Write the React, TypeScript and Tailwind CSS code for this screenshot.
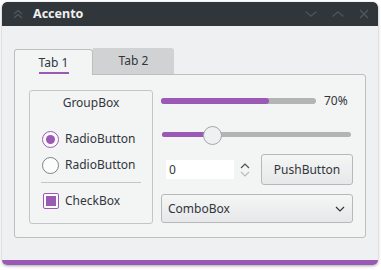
import React from 'react';

const font = { fontFamily: '"Noto Sans", "Open Sans", sans-serif' };

const Chevron = ({ d, className }: { d: string; className?: string }) => (
  <svg width="14" height="10" viewBox="0 0 14 10" className={className} fill="none">
    <path d={d} stroke="currentColor" strokeWidth="1.5" strokeLinecap="round" strokeLinejoin="round" />
  </svg>
);

const TitleBar = () => (
  <div className="flex h-[24px] items-center rounded-t-[5px] bg-[#31363b] pl-[10px] pr-[8px]">
    <svg width="12" height="12" viewBox="0 0 12 12" fill="none" className="text-[#4d545b]">
      <path d="M2 6 L6 2.5 L10 6 M2 10 L6 6.5 L10 10" stroke="currentColor" strokeWidth="1.6" strokeLinejoin="round" />
    </svg>
    <span className="ml-[9px] text-[12.5px] font-bold text-[#eff0f1]">Accento</span>
    <div className="ml-auto flex items-center gap-[13px] text-[#4d545b]">
      <Chevron d="M2 3 L7 7 L12 3" />
      <Chevron d="M2 7 L7 3 L12 7" />
      <svg width="12" height="12" viewBox="0 0 12 12" fill="none">
        <path d="M2 2 L10 10 M10 2 L2 10" stroke="currentColor" strokeWidth="1.6" />
      </svg>
    </div>
  </div>
);

const Radio = ({ checked, label }: { checked?: boolean; label: string }) => (
  <div className="flex h-[18px] items-center">
    <span
      className={`flex h-[17px] w-[17px] items-center justify-center rounded-full border bg-[#fcfcfc] ${
        checked ? 'border-[#9b59b6]' : 'border-[#7e8286]'
      }`}
    >
      {checked && <span className="h-[9px] w-[9px] rounded-full bg-[#9b59b6]" />}
    </span>
    <span className="ml-[6px]">{label}</span>
  </div>
);

const GroupBox = () => (
  <div className="flex h-[134px] w-[124px] shrink-0 flex-col rounded-[3px] border border-[#c3c5c7] px-[11px]">
    <div className="mt-[3px] text-center">GroupBox</div>
    <div className="mt-[18px] flex flex-col gap-[8px] pl-[1px]">
      <Radio checked label="RadioButton" />
      <Radio label="RadioButton" />
    </div>
    <div className="mt-[8px] h-px bg-[#c3c5c7]" />
    <div className="mt-[9px] flex items-center pl-[2px]">
      <span className="flex h-[16px] w-[16px] items-center justify-center rounded-[2px] border border-[#9b59b6] bg-[#fcfcfc]">
        <span className="h-[10px] w-[10px] bg-[#9b59b6]" />
      </span>
      <span className="ml-[6px]">CheckBox</span>
    </div>
  </div>
);

const Controls = () => (
  <div className="flex w-[192px] flex-col">
    <div className="mt-[5px] flex h-[12px] items-center">
      <div className="h-[6px] w-[155px] rounded-full bg-[#b4b4b4]">
        <div className="h-[6px] w-[108px] rounded-full bg-[#9b59b6]" />
      </div>
      <span className="ml-[8px]">70%</span>
    </div>
    <div className="relative mt-[18px] h-[20px] w-[190px] pl-px">
      <div className="absolute left-[1px] right-0 top-[7px] h-[5px] rounded-full bg-[#b4b4b4]" />
      <div className="absolute left-[1px] top-[7px] h-[5px] w-[50px] rounded-full bg-[#9b59b6]" />
      <div className="absolute left-[42px] top-[1px] h-[19px] w-[19px] rounded-full border border-[#a4a6a8] bg-[#eff0f1]" />
    </div>
    <div className="mt-[9px] flex items-center">
      <div className="ml-[5px] flex h-[19px] w-[68px] items-center bg-white pl-[3px]">0</div>
      <div className="ml-[5px] flex flex-col items-center">
        <svg width="12" height="8" viewBox="0 0 12 8" fill="none" className="text-[#4b5055]">
          <path d="M2 6 L6 2 L10 6" stroke="currentColor" strokeWidth="1.2" />
        </svg>
        <svg width="12" height="8" viewBox="0 0 12 8" fill="none" className="text-[#b8babc]">
          <path d="M2 2 L6 6 L10 2" stroke="currentColor" strokeWidth="1.2" />
        </svg>
      </div>
      <button className="ml-auto h-[31px] w-[92px] rounded-[3px] border border-[#b6b8ba] bg-gradient-to-b from-[#f4f5f5] to-[#e7e8e9] text-[#31363b]">
        PushButton
      </button>
    </div>
    <div className="mt-[9px] flex h-[29px] w-[192px] items-center rounded-[3px] border border-[#b6b8ba] bg-gradient-to-b from-[#f4f5f5] to-[#e7e8e9] pl-[6px] pr-[7px]">
      <span>ComboBox</span>
      <svg width="10" height="6" viewBox="0 0 10 6" fill="none" className="ml-auto text-[#31363b]">
        <path d="M1 1 L5 5 L9 1" stroke="currentColor" strokeWidth="1.2" />
      </svg>
    </div>
  </div>
);

export default function App() {
  return (
    <div className="h-[270px] w-[381px] bg-white p-[2px] pb-0 pr-[3px] text-[12px] text-[#31363b]" style={font}>
      <div className="flex w-full flex-col overflow-hidden rounded-[5px] shadow-[0_1px_3px_rgba(0,0,0,0.35)]">
        <TitleBar />
        <div className="bg-[#eff0f1] px-[12px] pb-[22px] pt-[22px]">
          <div className="flex h-[26px] items-end">
            <div className="relative z-10 -mb-px flex h-[26px] w-[79px] flex-col items-center rounded-t-[3px] border border-b-0 border-[#bcbec0] bg-[#f3f4f4]">
              <span className="mt-[4px] leading-[18px]">Tab 1</span>
              <span className="h-[2px] w-[30px] bg-[#9b59b6]" />
            </div>
            <div className="flex h-[26px] w-[81px] items-start justify-center rounded-tr-[3px] bg-[#d1d2d3] pt-[4px]">
              <span className="leading-[18px]">Tab 2</span>
            </div>
          </div>
          <div className="flex h-[164px] gap-[8px] rounded-b-[3px] rounded-tr-[3px] border border-[#bcbec0] bg-[#f3f4f4] pl-[14px] pt-[15px]">
            <GroupBox />
            <Controls />
          </div>
        </div>
        <div className="h-[5px] bg-[#9b59b6]" />
      </div>
    </div>
  );
}
